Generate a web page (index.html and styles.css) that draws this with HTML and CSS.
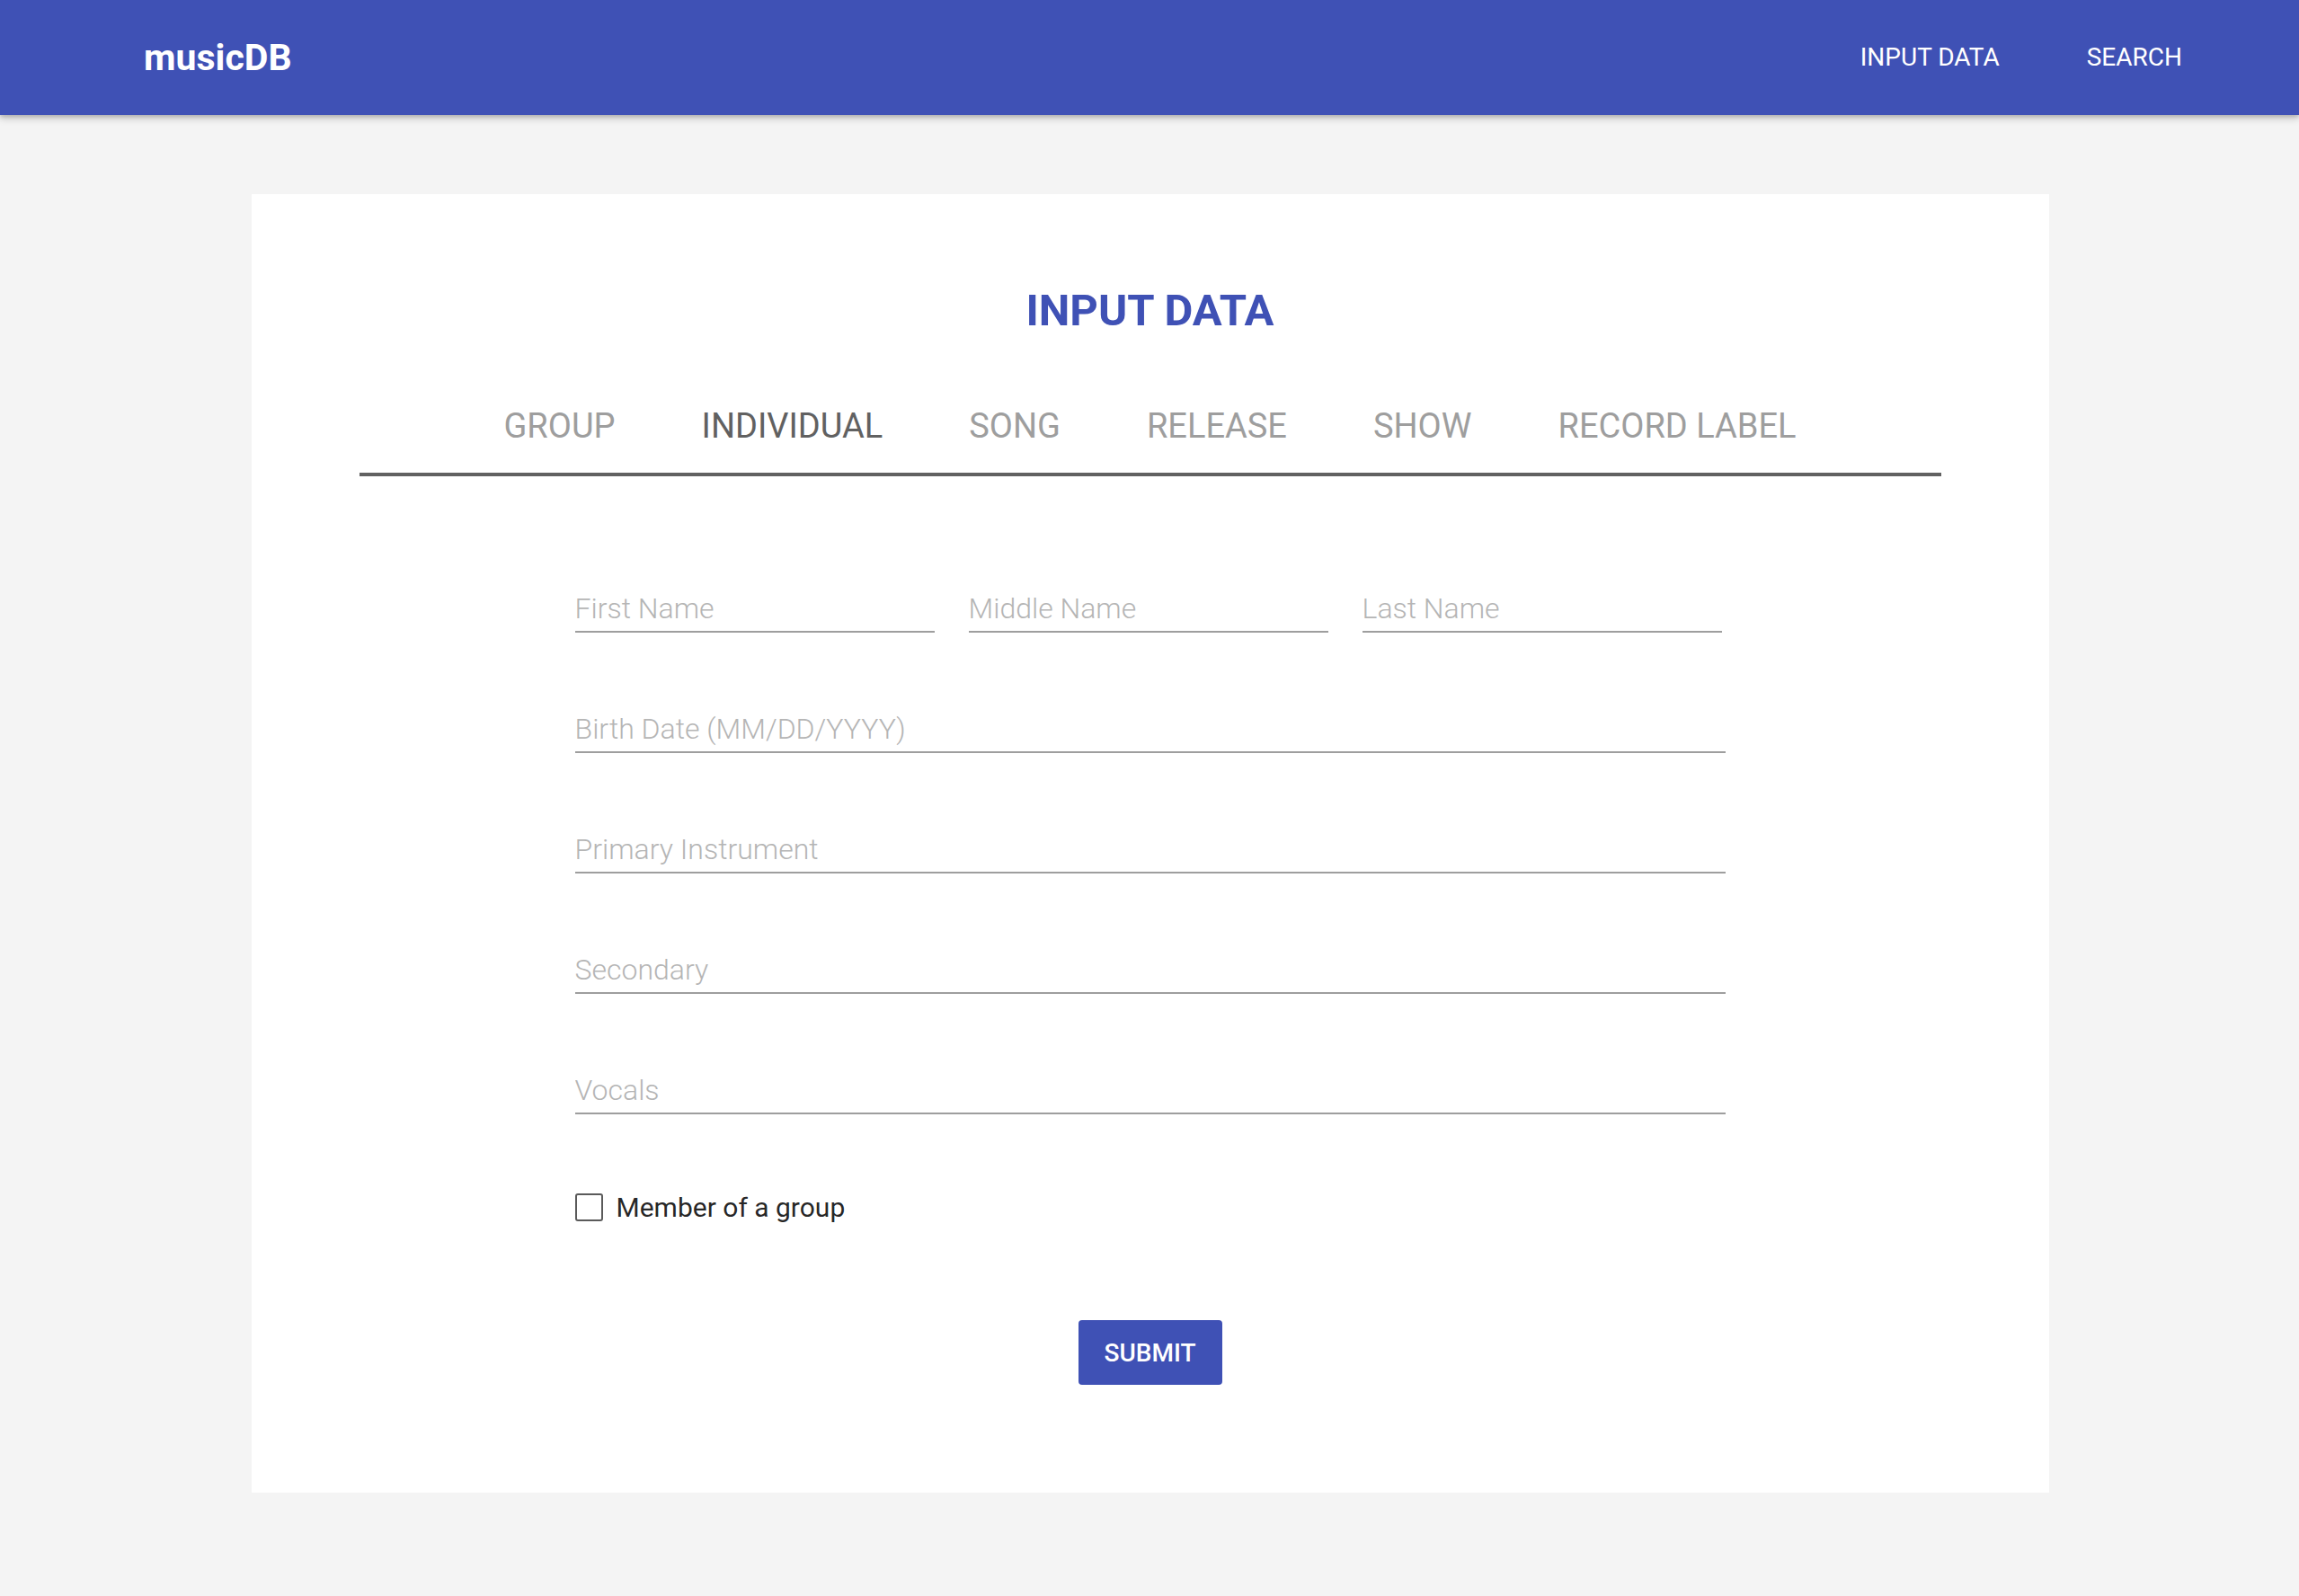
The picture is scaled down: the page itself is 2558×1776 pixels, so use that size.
FILE: index.html
```html
<!DOCTYPE html>
<html lang="en">
<head>
<meta charset="utf-8">
<title>musicDB</title>
<link rel="stylesheet" href="styles.css">
</head>
<body>
<header class="topbar">
  <a class="brand" href="#">musicDB</a>
  <nav class="topnav">
    <a href="#">INPUT DATA</a>
    <a href="#">SEARCH</a>
  </nav>
</header>
<main class="page">
  <section class="card">
    <h1 class="title">INPUT DATA</h1>
    <div class="tabs">
      <a class="tab" href="#">GROUP</a>
      <a class="tab active" href="#">INDIVIDUAL</a>
      <a class="tab" href="#">SONG</a>
      <a class="tab" href="#">RELEASE</a>
      <a class="tab" href="#">SHOW</a>
      <a class="tab" href="#">RECORD LABEL</a>
    </div>
    <form class="form">
      <div class="name-row">
        <input class="field" type="text" placeholder="First Name">
        <input class="field" type="text" placeholder="Middle Name">
        <input class="field" type="text" placeholder="Last Name">
      </div>
      <input class="field" type="text" placeholder="Birth Date (MM/DD/YYYY)">
      <input class="field" type="text" placeholder="Primary Instrument">
      <input class="field" type="text" placeholder="Secondary">
      <input class="field" type="text" placeholder="Vocals">
      <label class="check">
        <input class="check-box" type="checkbox">
        <span class="check-label">Member of a group</span>
      </label>
      <div class="actions">
        <button class="submit" type="button">SUBMIT</button>
      </div>
    </form>
  </section>
</main>
</body>
</html>
```
FILE: styles.css
```css
* {
  box-sizing: border-box;
}

html, body {
  margin: 0;
  padding: 0;
}

body {
  background: #f4f4f4;
  font-family: Roboto, "Liberation Sans", Arial, sans-serif;
  min-height: 1776px;
}

.topbar {
  height: 128px;
  background: #3f51b5;
  display: flex;
  align-items: center;
  justify-content: space-between;
  padding: 0 130px 0 160px;
  box-shadow: 0 4px 8px rgba(0, 0, 0, 0.18), 0 2px 4px rgba(0, 0, 0, 0.14);
  position: relative;
  z-index: 1;
}

.brand {
  color: #fff;
  text-decoration: none;
  font-size: 41px;
  font-weight: 700;
  line-height: 128px;
}

.topnav {
  display: flex;
  gap: 97px;
}

.topnav a {
  color: #fff;
  text-decoration: none;
  font-size: 28px;
  line-height: 128px;
}

.page {
  padding: 88px 0 0 1px;
}

.card {
  width: 2000px;
  margin: 0 auto;
  background: #fff;
  padding: 105px 120px 120px;
}

.title {
  margin: 0;
  text-align: center;
  color: #3f51b5;
  font-size: 49px;
  font-weight: 700;
  line-height: 49px;
}

.tabs {
  display: flex;
  justify-content: center;
  gap: 96px;
  padding: 85px 0 33px;
  border-bottom: 4px solid #616161;
}

.tab {
  color: #9e9e9e;
  text-decoration: none;
  font-size: 38px;
  line-height: 38px;
}

.tab.active {
  color: #616161;
}

.form {
  width: 1280px;
  margin: 0 auto;
  padding-top: 131px;
  display: flex;
  flex-direction: column;
  gap: 91px;
}

.name-row {
  display: grid;
  grid-template-columns: 400px 400px 400px;
  column-gap: 38px;
}

.field {
  display: block;
  width: 100%;
  height: 43px;
  margin: 0;
  padding: 0 0 9px 0;
  border: none;
  border-bottom: 2px solid #9e9e9e;
  border-radius: 0;
  background: transparent;
  outline: none;
  font-family: Roboto, "Liberation Sans", Arial, sans-serif;
  font-size: 32px;
  font-weight: 300;
  line-height: 32px;
  color: #212121;
}

.field::placeholder {
  color: #b5b5b5;
  opacity: 1;
}

.check {
  display: flex;
  align-items: center;
  gap: 15px;
  margin-top: -3px;
  cursor: pointer;
}

.check-box {
  appearance: none;
  -webkit-appearance: none;
  width: 31px;
  height: 31px;
  margin: 0;
  border: 2px solid #5a5a5a;
  border-radius: 3px;
  background: #fff;
}

.check-label {
  font-size: 30px;
  line-height: 30px;
  color: rgba(0, 0, 0, 0.87);
}

.actions {
  display: flex;
  justify-content: center;
  margin-top: 19px;
}

.submit {
  width: 160px;
  height: 72px;
  border: none;
  border-radius: 4px;
  background: #3f51b5;
  color: #fff;
  font-family: Roboto, "Liberation Sans", Arial, sans-serif;
  font-size: 28px;
  font-weight: 500;
  padding: 0;
  cursor: pointer;
}
```
